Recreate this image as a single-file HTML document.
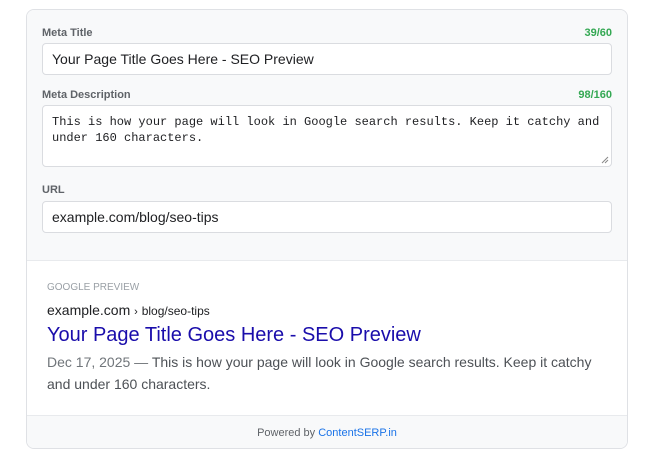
<!DOCTYPE html>
<html><head><style>
body{margin:0;background:#fff;font-family:"Liberation Sans",Arial,sans-serif;}
.card{position:absolute;left:26px;top:9px;width:600px;height:438px;border:1px solid #dfe1e5;border-radius:8px;overflow:hidden;background:#fff;}
.top{background:#f8f9fa;height:250px;border-bottom:1px solid #e8eaed;position:relative;}
.lbl{position:absolute;left:15px;font-size:11px;font-weight:bold;color:#5f6368;}
.cnt{position:absolute;right:15px;font-size:11px;font-weight:bold;color:#34a853;}
.inp{position:absolute;left:15px;width:570px;background:#fff;border:1px solid #dadce0;border-radius:4px;box-sizing:border-box;font-size:14px;color:#202124;padding-left:9px;}
.mono{font-family:"Liberation Mono","DejaVu Sans Mono",monospace;font-size:12px;line-height:16px;padding:8px 9px;}
.prev{position:absolute;left:20px;width:570px;}
.foot{position:absolute;left:0;right:0;bottom:0;height:32px;background:#f8f9fa;border-top:1px solid #e8eaed;text-align:center;font-size:11px;color:#5f6368;line-height:35px;}
</style></head><body>
<div class="card">
<div class="top">
<div class="lbl" style="top:17px">Meta Title</div><div class="cnt" style="top:17px">39/60</div>
<div class="inp" style="top:33px;height:32px;line-height:30px">Your Page Title Goes Here - SEO Preview</div>
<div class="lbl" style="top:79px">Meta Description</div><div class="cnt" style="top:79px">98/160</div>
<div class="inp mono" style="top:95px;height:62px">This is how your page will look in Google search results. Keep it catchy and under 160 characters.<svg style="position:absolute;right:2px;bottom:2px" width="8" height="8"><path d="M1 7L7 1M4 7L7 4" stroke="#888" stroke-width="1"/></svg></div>
<div class="lbl" style="top:174px">URL</div>
<div class="inp" style="top:191px;height:32px;line-height:30px">example.com/blog/seo-tips</div>
</div>
<div class="prev" style="top:272px">
<div style="font-size:10px;color:#9aa0a6;">GOOGLE PREVIEW</div>
<div style="margin-top:9px;font-size:14px;color:#202124;">example.com <span style="font-size:11px">›</span> <span style="font-size:12px">blog/seo-tips</span></div>
<div style="margin-top:4px;font-size:20px;color:#1a0dab;line-height:26px;">Your Page Title Goes Here - SEO Preview</div>
<div style="margin-top:3px;font-size:14px;line-height:22px;color:#4d5156;"><span style="color:#70757a">Dec 17, 2025 — </span>This is how your page will look in Google search results. Keep it catchy and under 160 characters.</div>
</div>
<div class="foot">Powered by <span style="color:#1a73e8">ContentSERP.in</span></div>
</div>
</body></html>
